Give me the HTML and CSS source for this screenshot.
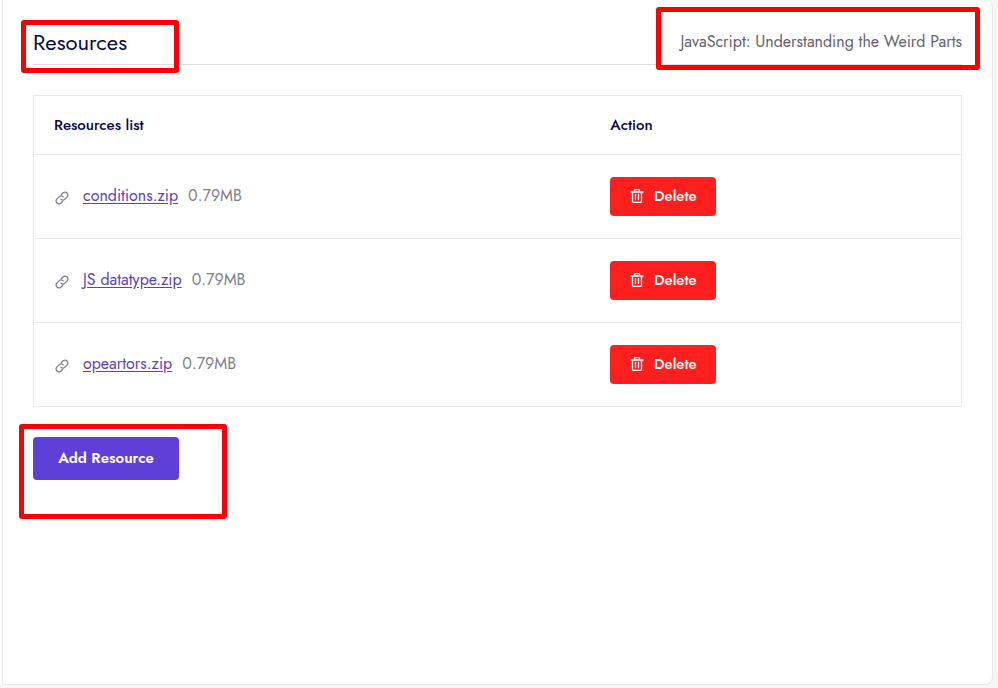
FILE: index.html
```html
<!DOCTYPE html>
<html lang="en">
<head>
<meta charset="utf-8">
<title>Resources</title>
<meta name="viewport" content="width=device-width, initial-scale=1">
<link rel="stylesheet" href="styles.css">
</head>
<body>
<svg class="sprite" aria-hidden="true">
  <symbol id="link" viewBox="0 0 24 24">
    <path d="M10 14a5 5 0 0 0 7 0l4-4a5 5 0 0 0-7-7l-3 3M14 10a5 5 0 0 0-7 0l-4 4a5 5 0 0 0 7 7l3-3"/>
  </symbol>
  <symbol id="trash" viewBox="0 0 14 14">
    <path d="M1 3h12M4.500 3V1.500a1 1 0 0 1 1-1h3a1 1 0 0 1 1 1V3M2.500 3v9a1.500 1.500 0 0 0 1.500 1.500h6A1.500 1.500 0 0 0 11.500 12V3M5.500 5.500v5M8.500 5.500v5"/>
  </symbol>
</svg>
<main class="page">
  <section class="card">
    <header class="card-header">
      <h1 class="title">Resources</h1>
      <p class="course">JavaScript: Understanding the Weird Parts</p>
      <span class="mark mark-title"></span>
      <span class="mark mark-course"></span>
    </header>
    <table class="resources">
      <thead>
        <tr><th class="name-col" scope="col">Resources list</th><th scope="col">Action</th></tr>
      </thead>
      <tbody>
        <tr>
          <td><div class="file"><svg class="link-icon" aria-hidden="true"><use href="#link"/></svg><a href="#conditions">conditions.zip</a><span>0.79MB</span></div></td>
          <td><button class="btn delete" type="button"><svg class="trash-icon" aria-hidden="true"><use href="#trash"/></svg>Delete</button></td>
        </tr>
        <tr>
          <td><div class="file"><svg class="link-icon" aria-hidden="true"><use href="#link"/></svg><a href="#datatype">JS datatype.zip</a><span>0.79MB</span></div></td>
          <td><button class="btn delete" type="button"><svg class="trash-icon" aria-hidden="true"><use href="#trash"/></svg>Delete</button></td>
        </tr>
        <tr>
          <td><div class="file"><svg class="link-icon" aria-hidden="true"><use href="#link"/></svg><a href="#opeartors">opeartors.zip</a><span>0.79MB</span></div></td>
          <td><button class="btn delete" type="button"><svg class="trash-icon" aria-hidden="true"><use href="#trash"/></svg>Delete</button></td>
        </tr>
      </tbody>
    </table>
    <div class="actions">
      <button class="btn add" type="button">Add Resource</button>
      <span class="mark mark-add"></span>
    </div>
  </section>
</main>
</body>
</html>
```
FILE: styles.css
```css
* { box-sizing: border-box; }

body {
  margin: 0;
  background: #f7f7f2;
  color: #7f7f8b;
  font: 16px/24px Jost, Lato, sans-serif;
}

.sprite { display: none; }

.page {
  min-height: 100vh;
  padding: 0 5px 3px 0;
  display: flex;
}

.card {
  flex: 1;
  padding: 20px 30px 30px;
  background: #fff;
  border: 1px solid #e8e8ea;
  border-top: 0;
  border-radius: 0 8px 8px 0;
  box-shadow: -2px 0 #fff;
  margin-left: 2px;
}

.card-header {
  position: relative;
  display: flex;
  align-items: center;
  justify-content: space-between;
  height: 45px;
  border-bottom: 1px solid #dedee2;
}

.title {
  margin: 0;
  color: #06063f;
  font-size: 22px;
  font-weight: 400;
}

.course {
  margin: 0;
  color: #636370;
}

.resources {
  width: 100%;
  margin: 30px 0;
  border-collapse: collapse;
  border: 1px solid #e8e8ea;
}

.resources th,
.resources td {
  padding: 0 20px;
  border-bottom: 1px solid #e8e8ea;
  text-align: left;
  vertical-align: middle;
}

.resources th {
  height: 59px;
  color: #06063f;
  font-size: 15px;
  font-weight: 500;
}

.resources td { height: 84px; }

.name-col { width: 60%; }

.file {
  display: flex;
  align-items: center;
  padding-bottom: 2px;
}

.file a {
  margin: 0 10px 0 14px;
  color: #5f42b8;
  text-underline-offset: 2px;
}

.link-icon,
.trash-icon {
  fill: none;
  stroke: currentColor;
  stroke-linecap: round;
  stroke-linejoin: round;
}

.link-icon {
  width: 14px;
  height: 14px;
  margin-top: 4px;
  margin-left: 1px;
  stroke-width: 2.2;
}

.trash-icon {
  width: 14px;
  height: 14px;
  stroke-width: 1.3;
}

.btn {
  border: 0;
  border-radius: 4px;
  padding: 0 0 2px;
  color: #fff;
  font: inherit;
  font-size: 15px;
  font-weight: 500;
  cursor: pointer;
}

.delete {
  display: flex;
  align-items: center;
  justify-content: center;
  gap: 10px;
  min-width: 106px;
  height: 39px;
  background: #ff1f1f;
}

.actions { position: relative; }

.add {
  display: block;
  min-width: 146px;
  height: 43px;
  background: #5e3fd7;
  font-weight: 600;
}

/* Highlight frames laid over the page */
.mark {
  position: absolute;
  border: 5px solid #fb0000;
  border-radius: 3px;
  pointer-events: none;
}

.mark-title { left: -12px; top: 0; width: 158px; height: 53px; }
.mark-course { right: -18px; top: -13px; width: 324px; height: 63px; }
.mark-add { left: -14px; top: -13px; width: 208px; height: 95px; }
```
